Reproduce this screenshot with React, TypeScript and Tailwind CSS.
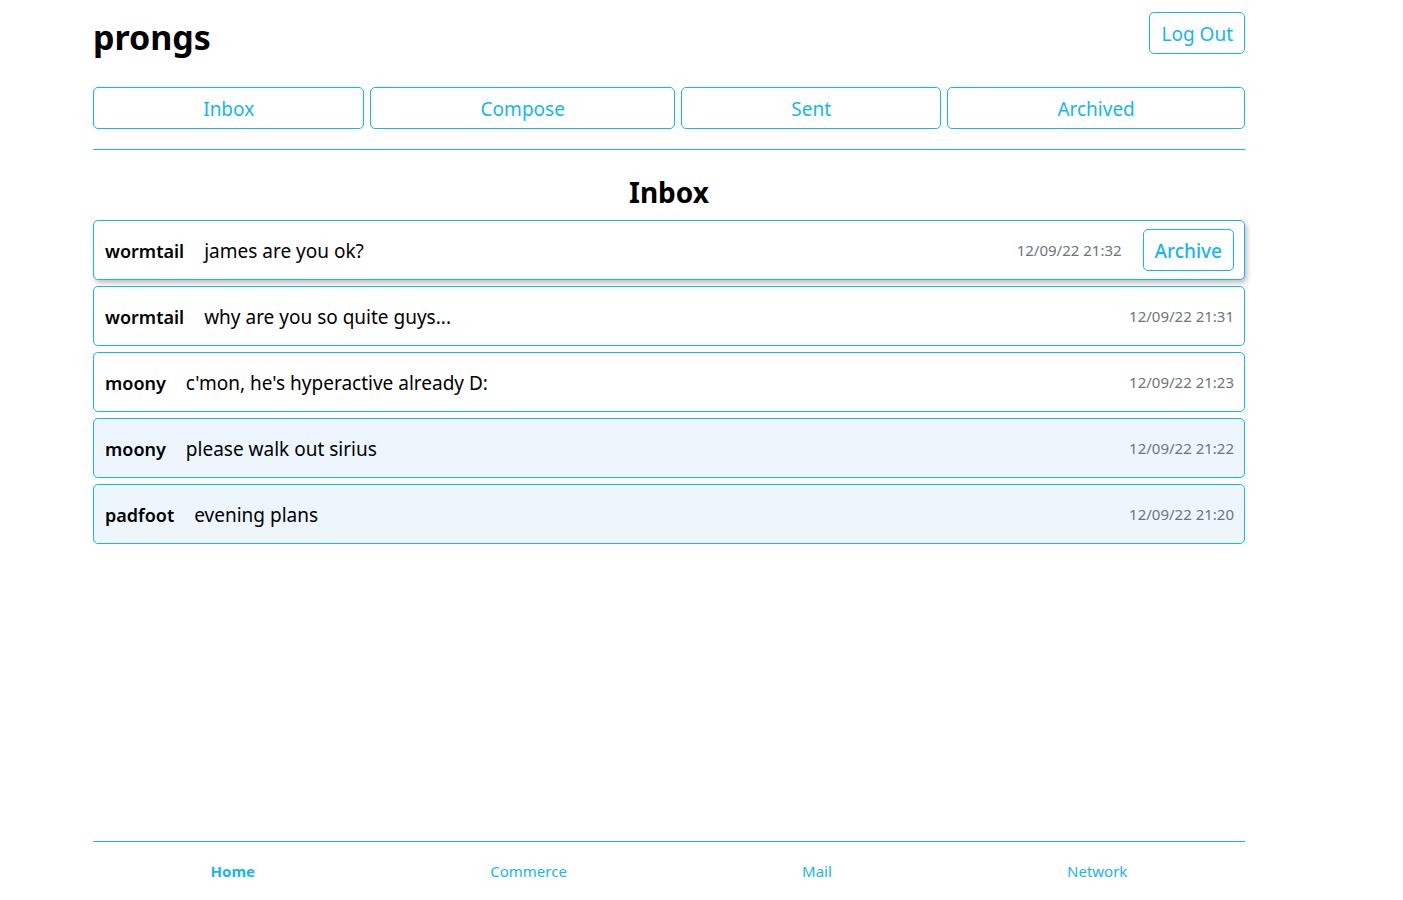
import React from "react";

const tabs = ["Inbox", "Compose", "Sent", "Archived"];

const emails = [
  { id: 1, sender: "wormtail", subject: "james are you ok?", time: "12/09/22 21:32", read: false, hover: true },
  { id: 2, sender: "wormtail", subject: "why are you so quite guys...", time: "12/09/22 21:31", read: false },
  { id: 3, sender: "moony", subject: "c'mon, he's hyperactive already D:", time: "12/09/22 21:23", read: false },
  { id: 4, sender: "moony", subject: "please walk out sirius", time: "12/09/22 21:22", read: true },
  { id: 5, sender: "padfoot", subject: "evening plans", time: "12/09/22 21:20", read: true },
];

const footerLinks = ["Home", "Commerce", "Mail", "Network"];

const App = () => {
  return (
    <div className="min-h-screen flex flex-col font-['Segoe_UI','Noto_Sans','Open_Sans',sans-serif] text-black bg-white">
      <div className="ml-[93px] w-[1152px] flex-1 flex flex-col">
        <div className="flex justify-between items-start pt-[12px] h-[87px]">
          <h1 className="text-[34px] font-bold leading-none mt-[8px]">prongs</h1>
          <button className="h-[42px] px-[11px] pt-[2px] border border-[#17b4f2] rounded-[5px] text-[#17b4f2] text-[19px]">
            Log Out
          </button>
        </div>

        <nav className="flex gap-[6px]">
          {tabs.map((t) => (
            <button
              key={t}
              className="flex-auto h-[42px] pt-[2px] border border-[#17b4f2] rounded-[5px] text-[#17b4f2] text-[19px]"
            >
              {t}
            </button>
          ))}
        </nav>

        <hr className="mt-[20px] border-0 border-t border-[#17b4f2]" />

        <h2 className="text-center text-[28px] font-bold leading-none mt-[28px] mb-[14px]">Inbox</h2>

        <div className="flex flex-col gap-[6px]">
          {emails.map((e) => (
            <div
              key={e.id}
              className={`h-[60px] flex items-center border border-[#17b4f2] rounded-[5px] pl-[11px] pr-[10px] ${
                e.read ? "bg-[#eef6fd]" : "bg-white"
              } ${e.hover ? "shadow-[2px_3px_5px_rgba(0,0,0,0.25)]" : ""}`}
            >
              <span className="text-[18px] font-semibold pt-[3px]">{e.sender}</span>
              <span className="text-[19px] ml-[20px] pt-[3px]">{e.subject}</span>
              <span className="ml-auto text-[15px] text-[#6c757d] pt-[1px]">{e.time}</span>
              {e.hover && (
                <button className="ml-[21px] h-[42px] px-[11px] pt-[2px] border border-[#17b4f2] rounded-[5px] text-[#17b4f2] text-[19px] font-medium">
                  Archive
                </button>
              )}
            </div>
          ))}
        </div>
      </div>

      <footer className="ml-[93px] w-[1152px] border-t border-[#17b4f2] h-[59px] flex justify-around items-center">
        {footerLinks.map((l, i) => (
          <a key={l} href="#" className={`text-[15px] text-[#17b4f2] ${i === 0 ? "font-bold" : ""}`}>
            {l}
          </a>
        ))}
      </footer>
    </div>
  );
};

export default App;
